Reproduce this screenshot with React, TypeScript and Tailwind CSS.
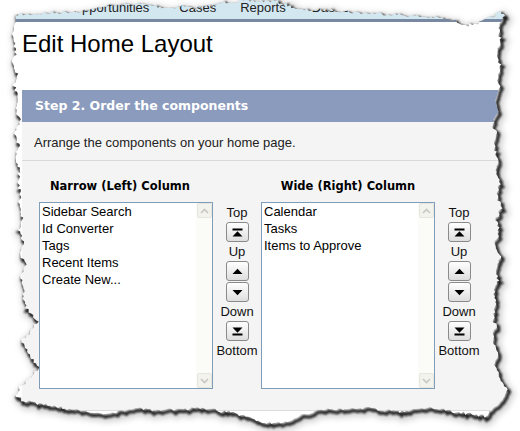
import { useMemo } from 'react'

type Pt = [number, number]

// outline of the torn paper, clockwise from top-left
const TOP: Pt[] = [
  [15, 15], [30, 14], [50, 13], [66, 12], [80, 11], [92, 10], [104, 6], [118, 5], [140, 4],
  [156, 6], [168, 8], [182, 6], [196, 8], [212, 6], [224, 2], [250, 1], [275, 1], [288, 5],
  [300, 10], [318, 10], [336, 10], [350, 12], [368, 13], [390, 14], [415, 16], [440, 18],
  [455, 21], [468, 25], [482, 22], [492, 17], [500, 12], [505, 16],
]
const RIGHT: Pt[] = [
  [498, 28], [501, 40], [496, 52], [500, 64], [497, 76], [501, 88], [495, 100], [499, 112],
  [493, 124], [497, 136], [494, 148], [499, 160], [496, 172], [500, 184], [497, 196],
  [501, 208], [496, 220], [499, 232], [495, 244], [500, 256], [496, 268], [498, 280],
  [494, 292], [497, 304], [493, 316], [496, 328], [492, 340], [497, 352], [495, 364],
  [500, 376], [505, 386], [507, 392],
]
const BOTTOM: Pt[] = [
  [502, 400], [495, 405], [485, 416], [470, 414], [450, 411], [433, 408], [415, 410],
  [400, 412], [385, 410], [367, 408], [345, 409], [317, 410], [300, 416], [283, 422],
  [267, 423], [250, 418], [233, 413], [215, 410], [200, 408], [183, 409], [167, 410],
  [150, 410], [133, 408], [120, 411], [110, 413], [95, 413], [83, 412], [65, 408],
  [50, 405], [33, 403], [22, 400], [15, 395],
]
const LEFT: Pt[] = [
  [20, 388], [28, 380], [38, 368], [33, 360], [26, 350], [22, 340], [30, 332], [38, 322],
  [33, 315], [26, 308], [22, 298], [25, 288], [21, 276], [26, 265], [20, 254], [23, 242],
  [18, 230], [22, 218], [19, 206], [21, 194], [17, 182], [20, 170], [16, 158], [19, 146],
  [15, 134], [20, 122], [16, 110], [19, 98], [14, 86], [17, 74], [13, 62], [16, 50],
  [12, 38], [15, 26], [15, 15],
]

function jagged(pts: Pt[], seed: number, amp: number) {
  let s = seed
  const rnd = () => {
    s = (s * 16807) % 2147483647
    return s / 2147483647
  }
  const out: string[] = []
  for (let i = 0; i < pts.length - 1; i++) {
    const [x1, y1] = pts[i]
    const [x2, y2] = pts[i + 1]
    const len = Math.hypot(x2 - x1, y2 - y1)
    const n = Math.max(1, Math.round(len / 2.2))
    const nx = -(y2 - y1) / len
    const ny = (x2 - x1) / len
    for (let k = 0; k < n; k++) {
      const t = k / n
      const j = (rnd() - 0.5) * 2 * amp
      out.push(`${(x1 + (x2 - x1) * t + nx * j).toFixed(1)},${(y1 + (y2 - y1) * t + ny * j).toFixed(1)}`)
    }
  }
  return out
}

function TornEdges() {
  const edge = useMemo(() => {
    const all = [...TOP, ...RIGHT, ...BOTTOM, ...LEFT]
    return 'M' + jagged(all, 7, 1.7).join(' L') + ' Z'
  }, [])
  const outside = `M0,0 H520 V431 H0 Z ${edge}`

  return (
    <svg className="absolute inset-0 pointer-events-none" width="520" height="431" viewBox="0 0 520 431">
      <defs>
        <filter id="soft" x="-5%" y="-5%" width="110%" height="110%">
          <feGaussianBlur stdDeviation="0.9" />
        </filter>
        <filter id="wide" x="-5%" y="-5%" width="110%" height="110%">
          <feGaussianBlur stdDeviation="3" />
        </filter>
        <clipPath id="out">
          <path d={outside} clipRule="evenodd" />
        </clipPath>
      </defs>
      <path d={outside} fill="#fff" fillRule="evenodd" />
      <g clipPath="url(#out)">
        <path d={edge} fill="none" stroke="#000" strokeOpacity="0.2" strokeWidth="7" transform="translate(3 4)" filter="url(#wide)" />
        <path d={edge} fill="none" stroke="#111" strokeOpacity="0.95" strokeWidth="3" transform="translate(1.8 2.6)" filter="url(#soft)" />
      </g>
    </svg>
  )
}

function ScrollArrow({ dir }: { dir: 'up' | 'down' }) {
  return (
    <div className="w-[15px] h-[15px] flex items-center justify-center rounded-[2px] border border-[#e6e6df] bg-[#f3f3ed]">
      <svg width="9" height="6" viewBox="0 0 9 6">
        <path
          d={dir === 'up' ? 'M1 5 L4.5 1.5 L8 5' : 'M1 1 L4.5 4.5 L8 1'}
          fill="none"
          stroke="#c8c8c0"
          strokeWidth="1.6"
        />
      </svg>
    </div>
  )
}

function ListBox({ items }: { items: string[] }) {
  return (
    <div className="flex w-[174px] h-[187px] border border-[#7f9db9] bg-white">
      <ul className="flex-1 pl-[2px] text-[13px] leading-[17px] text-black">
        {items.map((i) => (
          <li key={i}>{i}</li>
        ))}
      </ul>
      <div className="w-[16px] flex flex-col justify-between items-end bg-[#fbfbf7]">
        <ScrollArrow dir="up" />
        <ScrollArrow dir="down" />
      </div>
    </div>
  )
}

function MoveIcon({ kind }: { kind: 'top' | 'up' | 'down' | 'bottom' }) {
  return (
    <svg width="11" height="9" viewBox="0 0 11 9">
      {kind === 'top' && (
        <>
          <rect x="0.5" y="0.5" width="10" height="2" fill="#000" />
          <path d="M0.5 8.5 L5.5 3.3 L10.5 8.5 Z" fill="#000" />
        </>
      )}
      {kind === 'up' && <path d="M0.5 7 L5.5 1.8 L10.5 7 Z" fill="#000" />}
      {kind === 'down' && <path d="M0.5 2 L5.5 7.2 L10.5 2 Z" fill="#000" />}
      {kind === 'bottom' && (
        <>
          <path d="M0.5 0.5 L5.5 5.7 L10.5 0.5 Z" fill="#000" />
          <rect x="0.5" y="6.5" width="10" height="2" fill="#000" />
        </>
      )}
    </svg>
  )
}

function MoveButton({ kind }: { kind: 'top' | 'up' | 'down' | 'bottom' }) {
  return (
    <button className="w-[23px] h-[20px] flex items-center justify-center rounded-[3px] border border-[#8a8a8a] bg-linear-to-b from-white to-[#dedede]">
      <MoveIcon kind={kind} />
    </button>
  )
}

function OrderButtons() {
  return (
    <div className="flex flex-col items-center gap-[1px] pt-[2px] text-[13px] leading-[17px] text-[#111]">
      <span>Top</span>
      <MoveButton kind="top" />
      <span>Up</span>
      <MoveButton kind="up" />
      <MoveButton kind="down" />
      <span>Down</span>
      <MoveButton kind="bottom" />
      <span>Bottom</span>
    </div>
  )
}

export default function App() {
  return (
    <div className="relative w-[520px] h-[431px] overflow-hidden bg-white font-['Liberation_Sans',Arial,sans-serif]">
      {/* tab bar, mostly torn away */}
      <div className="h-[22px] ml-[15px] bg-[#d3e7f0] border-b-[3px] border-[#7888a3] flex text-[13px] leading-[13px] text-[#222] pt-[1px]">
        <span className="ml-[57px]">Opportunities</span>
        <span className="ml-[30px]">Cases</span>
        <span className="ml-[24px]">Reports</span>
        <span className="ml-[26px]">Dashboards</span>
      </div>

      <h1 className="mt-[8px] ml-[22px] text-[24px] leading-[28px] text-black">Edit Home Layout</h1>

      <div className="mt-[32px] ml-[22px]">
        <div className="h-[32px] pl-[13px] flex items-center bg-[#8b9bbd] text-white font-['DejaVu_Sans',Verdana,sans-serif] font-bold text-[12.5px]">
          Step 2. Order the components
        </div>

        <div className="bg-[#f4f4f4] border-b border-[#dcdcdc] pb-[21px]">
          <p className="pl-[12px] pt-[13px] pb-[9px] text-[13px] leading-[16px] text-[#222] border-b border-[#dadada]">
            Arrange the components on your home page.
          </p>

          <div className="grid grid-cols-[174px_48px_174px_48px] gap-y-[9px] pl-[17px] pt-[18px]">
            <h3 className="pr-[12px] text-center font-['DejaVu_Sans',Verdana,sans-serif] font-bold text-[11.5px] leading-[14px] text-black">
              Narrow (Left) Column
            </h3>
            <div />
            <h3 className="text-center font-['DejaVu_Sans',Verdana,sans-serif] font-bold text-[11.5px] leading-[14px] text-black">
              Wide (Right) Column
            </h3>
            <div />

            <ListBox items={['Sidebar Search', 'Id Converter', 'Tags', 'Recent Items', 'Create New...']} />
            <OrderButtons />
            <ListBox items={['Calendar', 'Tasks', 'Items to Approve']} />
            <OrderButtons />
          </div>
        </div>
      </div>

      <TornEdges />
    </div>
  )
}
